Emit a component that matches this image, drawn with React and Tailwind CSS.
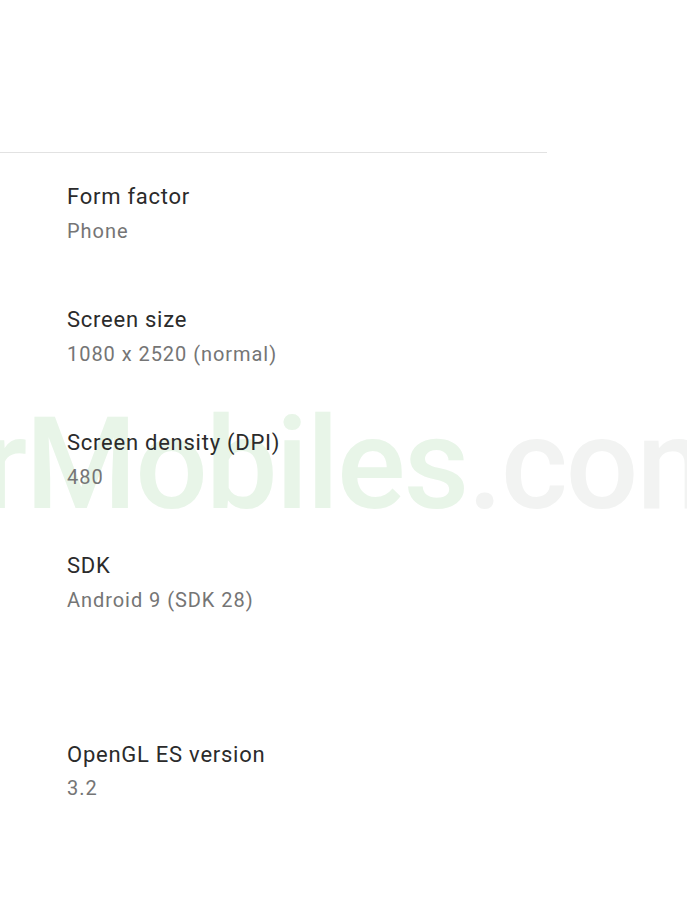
export default function App() {
  const items = [
    { t: "Form factor", v: "Phone" },
    { t: "Screen size", v: "1080 x 2520 (normal)" },
    { t: "Screen density (DPI)", v: "480" },
    { t: "SDK", v: "Android 9 (SDK 28)" },
  ];
  return (
    <div className="relative w-[687px] h-[916px] bg-white overflow-hidden" style={{ fontFamily: "Roboto, 'Liberation Sans', sans-serif" }}>
      <div className="pointer-events-none absolute left-[-18px] top-[400px] whitespace-nowrap text-[128px] leading-none font-medium tracking-[-2px]">
        <span className="text-[#e8f5e8]">rMobiles</span>
        <span className="text-[#f2f3f2]">.com</span>
      </div>
      <div className="h-[152px]" />
      <div className="w-[547px] border-b border-[#e2e2e2]" />
      <div className="relative pl-[67px] pt-[30px]">
        {items.map((it, i) => (
          <div key={i} className={i > 0 ? "mt-[61px]" : ""}>
            <div className="text-[22px] leading-[28px] tracking-[0.75px] text-[#2b2b2b]">{it.t}</div>
            <div className="mt-[6px] text-[20px] leading-[28px] tracking-[0.95px] text-[#757575]">{it.v}</div>
          </div>
        ))}
        <div className="mt-[127px]">
          <div className="text-[22px] leading-[28px] tracking-[0.75px] text-[#2b2b2b]">OpenGL ES version</div>
          <div className="mt-[5px] text-[20px] leading-[28px] tracking-[0.95px] text-[#757575]">3.2</div>
        </div>
      </div>
    </div>
  );
}
